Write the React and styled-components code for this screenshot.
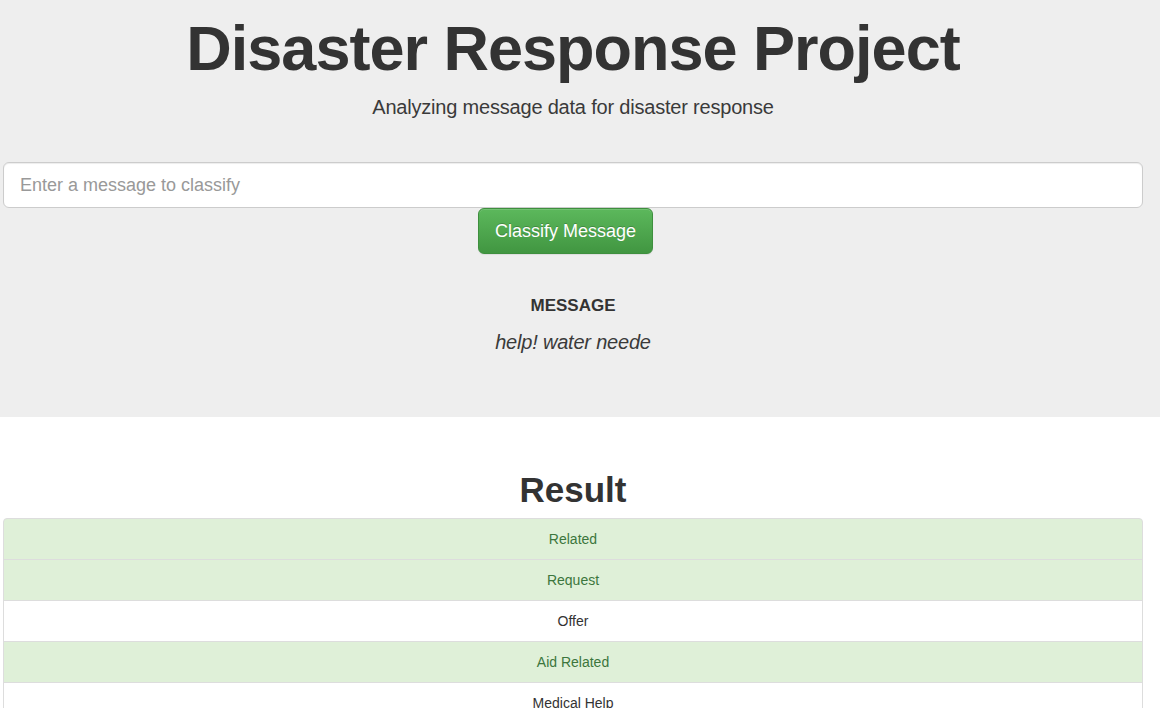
import React from "react";
import styled, { createGlobalStyle } from "styled-components";

const GlobalStyle = createGlobalStyle`
  html, body {
    margin: 0;
    padding: 0;
    background: #fff;
    font-family: "Liberation Sans", Arial, sans-serif;
    color: #333;
    font-size: 14px;
  }
`;

const Jumbotron = styled.div`
  background-color: #eee;
  padding: 14px 17px 0 3px;
  height: 417px;
  box-sizing: border-box;
`;

const Title = styled.h1`
  margin: 0;
  font-size: 63px;
  line-height: 69px;
  font-weight: 700;
  letter-spacing: -1px;
  text-align: center;
  color: #333;
`;

const Subtitle = styled.p`
  margin: 9px 0 0;
  font-size: 20px;
  line-height: 30px;
  font-weight: 300;
  letter-spacing: -0.2px;
  text-align: center;
  color: #3a3a3a;
`;

const Form = styled.form`
  margin-top: 40px;
  display: flex;
  flex-direction: column;
`;

const MessageInput = styled.input`
  box-sizing: border-box;
  width: 100%;
  height: 46px;
  padding: 10px 16px;
  font-size: 18px;
  font-family: inherit;
  color: #555;
  background: #fff;
  border: 1px solid #ccc;
  border-radius: 6px;
  box-shadow: inset 0 1px 1px rgba(0, 0, 0, 0.075);
  outline: none;
  &::placeholder {
    color: #999;
  }
`;

const ButtonRow = styled.div`
  display: flex;
  justify-content: center;
  padding-right: 15px;
`;

const SubmitButton = styled.button`
  box-sizing: border-box;
  height: 46px;
  width: 175px;
  font-family: inherit;
  font-size: 18px;
  color: #fff;
  background-image: linear-gradient(to bottom, #5cb85c 0%, #419641 100%);
  border: 1px solid #3e8f3e;
  border-radius: 6px;
  text-shadow: 0 -1px 0 rgba(0, 0, 0, 0.2);
  box-shadow: inset 0 1px 0 rgba(255, 255, 255, 0.15), 0 1px 1px rgba(0, 0, 0, 0.075);
  cursor: pointer;
`;

const MessageLabel = styled.h4`
  margin: 42px 0 0;
  font-size: 17px;
  line-height: 20px;
  font-weight: 700;
  text-align: center;
`;

const MessageText = styled.p`
  margin: 11px 0 0;
  font-size: 20px;
  line-height: 30px;
  font-style: italic;
  font-weight: 300;
  letter-spacing: -0.2px;
  text-align: center;
  color: #3a3a3a;
`;

const Results = styled.div`
  padding: 47px 17px 0 3px;
`;

const ResultTitle = styled.h1`
  margin: 0 0 2px;
  font-size: 35px;
  line-height: 52px;
  font-weight: 700;
  text-align: center;
  color: #333;
`;

const ListGroup = styled.ul`
  list-style: none;
  margin: 0;
  padding: 0;
`;

const ListItem = styled.li`
  padding: 10px 15px;
  margin-bottom: -1px;
  line-height: 20px;
  font-size: 14px;
  text-align: center;
  border: 1px solid #ddd;
  background-color: ${({ $active }) => ($active ? "#dff0d8" : "#fff")};
  color: ${({ $active }) => ($active ? "#3c763d" : "#333")};
  &:first-child {
    border-top-left-radius: 4px;
    border-top-right-radius: 4px;
  }
`;

const categories = [
  { name: "Related", on: true },
  { name: "Request", on: true },
  { name: "Offer", on: false },
  { name: "Aid Related", on: true },
  { name: "Medical Help", on: false },
  { name: "Medical Products", on: false },
];

export default function App() {
  return (
    <>
      <GlobalStyle />
      <Jumbotron>
        <Title>Disaster Response Project</Title>
        <Subtitle>Analyzing message data for disaster response</Subtitle>
        <Form onSubmit={(e) => e.preventDefault()}>
          <MessageInput placeholder="Enter a message to classify" name="query" />
          <ButtonRow>
            <SubmitButton type="submit">Classify Message</SubmitButton>
          </ButtonRow>
        </Form>
        <MessageLabel>MESSAGE</MessageLabel>
        <MessageText>help! water neede</MessageText>
      </Jumbotron>
      <Results>
        <ResultTitle>Result</ResultTitle>
        <ListGroup>
          {categories.map((c) => (
            <ListItem key={c.name} $active={c.on}>
              {c.name}
            </ListItem>
          ))}
        </ListGroup>
      </Results>
    </>
  );
}
